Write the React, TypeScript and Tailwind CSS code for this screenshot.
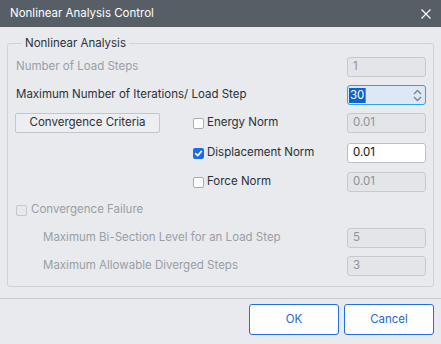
import React from 'react';

const font = { fontFamily: 'Inter, "Noto Sans", sans-serif' };

const Box = ({ value, disabled = true }: { value: string; disabled?: boolean }) => (
  <div
    className={`w-[79px] h-[20px] flex items-center px-[5px] rounded-[3px] border text-[11.5px] ${
      disabled ? 'bg-[#e3e5e9] border-[#c6c9ce] text-[#8d9299]' : 'bg-white border-[#bcc0c6] text-[#111]'
    }`}
  >
    {value}
  </div>
);

const Check = ({ checked = false, disabled = false }: { checked?: boolean; disabled?: boolean }) =>
  checked ? (
    <span className="w-[11px] h-[11px] rounded-[2px] bg-[#1c6ce0] flex items-center justify-center">
      <svg width="9" height="9" viewBox="0 0 9 9">
        <path d="M1.6 4.6 L3.7 6.6 L7.4 2.4" stroke="white" strokeWidth="1.6" fill="none" strokeLinecap="round" strokeLinejoin="round" />
      </svg>
    </span>
  ) : (
    <span
      className={`w-[11px] h-[11px] rounded-[2px] border ${
        disabled ? 'border-[#c4c7cc] bg-[#e6e8ec]' : 'border-[#a9adb3] bg-white'
      }`}
    />
  );

export default function App() {
  return (
    <div className="w-[441px] h-[344px] bg-[#e8eaee] flex flex-col text-[11.5px] text-[#2b3036]" style={font}>
      {/* title bar */}
      <div className="h-[27px] bg-[#575e66] flex items-center justify-between pl-[10px] pr-[10px] text-white">
        <span className="text-[11.5px]">Nonlinear Analysis Control</span>
        <svg width="10" height="10" viewBox="0 0 10 10">
          <path d="M0.5 0.5 L9.5 9.5 M9.5 0.5 L0.5 9.5" stroke="white" strokeWidth="1.2" />
        </svg>
      </div>

      <fieldset className="mx-[7px] mt-[9px] border border-[#cfd2d7] rounded-[3px] pl-[8px] pr-[7px] pt-[7px] pb-[10px] flex flex-col">
        <legend className="ml-[6px] px-[3px] leading-[14px] text-[11.5px] text-[#2b3036]">Nonlinear Analysis</legend>

        <div className="h-[20px] flex items-center justify-between">
          <span className="text-[#9a9ea5]">Number of Load Steps</span>
          <Box value="1" />
        </div>

        <div className="h-[20px] mt-[8px] flex items-center justify-between">
          <span>Maximum Number of Iterations/ Load Step</span>
          <div className="w-[79px] h-[20px] flex items-center pl-[1px] pr-[3px] rounded-[3px] border border-[#2aa7e2] bg-[#dde8f7]">
            <span className="bg-[#0b63cf] text-white leading-[15px] px-[1px]">30</span>
            <span className="w-[1px] h-[15px] bg-[#e0682a]" />
            <div className="ml-auto flex flex-col items-center gap-[1px]">
              <svg width="9" height="6" viewBox="0 0 9 6">
                <path d="M1 5 L4.5 1.5 L8 5" stroke="#7b8088" strokeWidth="1.3" fill="none" />
              </svg>
              <svg width="9" height="6" viewBox="0 0 9 6">
                <path d="M1 1 L4.5 4.5 L8 1" stroke="#7b8088" strokeWidth="1.3" fill="none" />
              </svg>
            </div>
          </div>
        </div>

        <div className="mt-[8px] flex">
          <div className="w-[177px] shrink-0">
            <button className="ml-[-1px] w-[145px] h-[20px] rounded-[2px] border border-[#c3c6cb] bg-[#eceef1] text-[11.5px] text-[#2b3036]">
              Convergence Criteria
            </button>
          </div>
          <div className="flex-1 flex flex-col">
            <div className="h-[20px] flex items-center">
              <Check />
              <span className="ml-[3px]">Energy Norm</span>
              <div className="ml-auto"><Box value="0.01" /></div>
            </div>
            <div className="h-[20px] mt-[10px] flex items-center">
              <Check checked />
              <span className="ml-[3px]">Displacement Norm</span>
              <div className="ml-auto"><Box value="0.01" disabled={false} /></div>
            </div>
            <div className="h-[20px] mt-[9px] flex items-center">
              <Check />
              <span className="ml-[3px]">Force Norm</span>
              <div className="ml-auto"><Box value="0.01" /></div>
            </div>
          </div>
        </div>

        <div className="h-[20px] mt-[8px] flex items-center">
          <Check disabled />
          <span className="ml-[4px] text-[#9a9ea5]">Convergence Failure</span>
        </div>

        <div className="h-[20px] mt-[8px] flex items-center justify-between pl-[27px]">
          <span className="text-[#9a9ea5]">Maximum Bi-Section Level for an Load Step</span>
          <Box value="5" />
        </div>

        <div className="h-[20px] mt-[8px] flex items-center justify-between pl-[27px]">
          <span className="text-[#9a9ea5]">Maximum Allowable Diverged Steps</span>
          <Box value="3" />
        </div>
      </fieldset>

      <div className="mt-[11px] border-t border-[#c9ccd1] flex-1 flex justify-end items-start pt-[5px] pr-[7px] gap-[5px]">
        <button className="w-[90px] h-[31px] rounded-[3px] border border-[#1f6fe6] bg-white text-[#2668d0] text-[11.5px]">OK</button>
        <button className="w-[90px] h-[31px] rounded-[3px] border border-[#1f6fe6] bg-white text-[#2668d0] text-[11.5px]">Cancel</button>
      </div>
    </div>
  );
}
